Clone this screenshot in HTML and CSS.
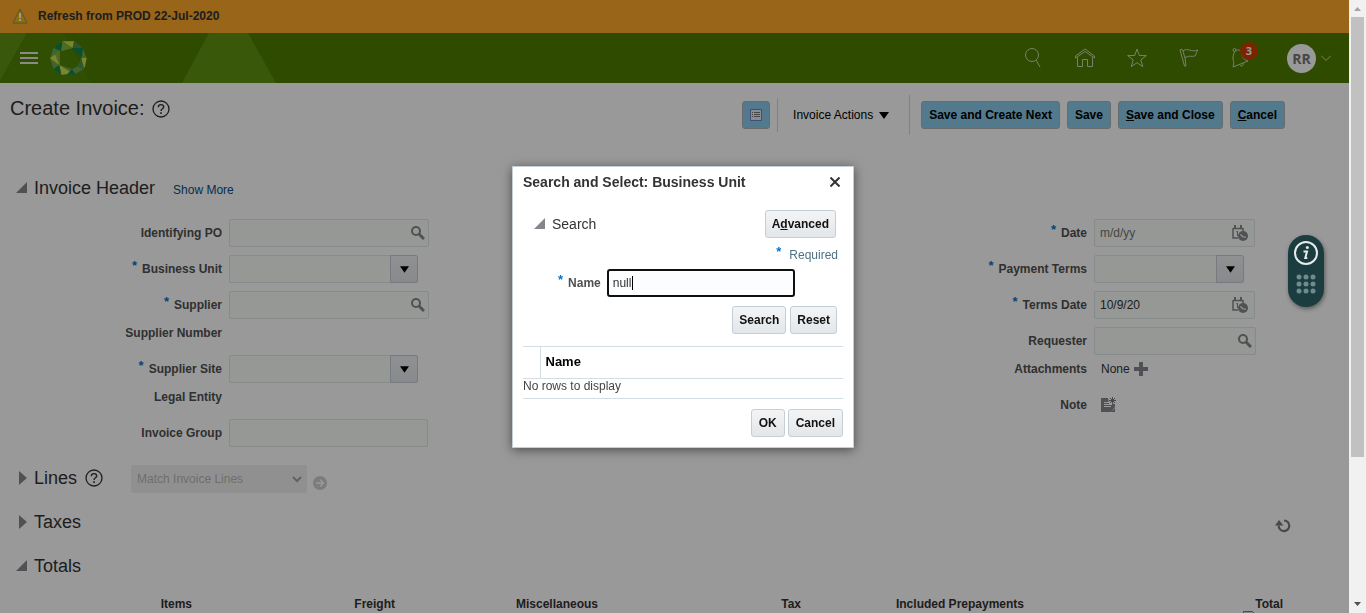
FILE: index.html
```html
<!DOCTYPE html>
<html lang="en">
<head>
<meta charset="utf-8">
<title>Create Invoice</title>
<link rel="stylesheet" href="styles.css">
</head>
<body>
<svg class="sprite" aria-hidden="true">
  <symbol id="lens" viewBox="0 0 14 14"><circle cx="5" cy="5" r="4" fill="none" stroke="#84888c" stroke-width="2"/><path d="M8 8l5 5" stroke="#84888c" stroke-width="3"/></symbol>
  <symbol id="caret" viewBox="0 0 10 7"><path d="M0 0h10L5 7z"/></symbol>
  <symbol id="open" viewBox="0 0 12 14"><path d="M11 1v11H0z" fill="#84888c"/></symbol>
  <symbol id="closed" viewBox="0 0 12 14"><path d="M3 0l8 7-8 7z" fill="#84888c"/></symbol>
  <symbol id="help" viewBox="0 0 18 18"><circle cx="9" cy="9" r="8" fill="none" stroke="#333" stroke-width="1.3"/><path d="M6.3 7.2Q6.400 4.600 9 4.600T11.700 7C11.700 8.800 9 8.800 9 11" fill="none" stroke="#333" stroke-width="1.4"/><path d="M8.200 12.300h1.600v1.600H8.200z" fill="#333"/></symbol>
  <symbol id="calendar" viewBox="0 0 16 16"><path d="M1 3v10h5M11 3v3M1 3.500h10" fill="none" stroke="#84888c" stroke-width="1.500"/><path d="M2 0h2v4H2zM8 0h2v4H8zM4.500 6H6v5H5V7.200h-.8z" fill="#84888c"/><circle cx="11" cy="11" r="5" fill="#84888c"/><path d="M8.500 9.500L11 12h3" fill="none" stroke="#fff" stroke-width="1.200"/></symbol>
</svg>

<div class="page">
  <div class="banner">
    <svg width="16" height="16" viewBox="0 0 16 16"><path d="M8 1l7 14H1z" fill="#e8b818" stroke="#a08848" stroke-linejoin="round"/><path d="M8 5v5M8 11v2" stroke="#fff" stroke-width="2"/></svg>
    <span>Refresh from PROD 22-Jul-2020</span>
  </div>

  <header class="topbar">
    <svg class="facets" width="276" height="50" viewBox="0 0 276 50"><path d="M0 0h27L0 48z" fill="#5f9315"/><path d="M27 0h36l29 50H0z" fill="#528404"/><path d="M209 0h39l28 50h-94z" fill="#60930f"/></svg>
    <button class="icon menu" aria-label="Navigator"><svg width="18" height="14" viewBox="0 0 18 14"><path d="M0 2h18M0 7h18M0 12h18" stroke="#e6eadd" stroke-width="2"/></svg></button>
    <a class="logo" href="#" aria-label="Home page">
      <svg width="37" height="34" viewBox="0 0 111 102">
        <path fill-rule="evenodd" fill="#6da64d" d="M38 1h34l26 19 12 32-10 32-28 17H36L10 84 0 52l10-32zM28 32v40l38 12 18-8 11-26-27-30z"/>
        <path fill="#d0e040" d="M38 1h34l-4 20zM0 52l28-22v42zM92 51l18-1-6 32zM28 72l38 24-31 5z"/>
        <path fill="#11854b" d="M10 20L38 1l-5 30zM66 21l34-3-5 32zM66 84l11 17H50zM10 84l18-12 5 28z"/>
        <path fill="#86b23e" d="M38 1l30 20-34 9zM28 30l-14 8 14 34z"/>
        <path fill="#4d8f52" d="M95 50L82 76l18 10zM72 1l26 19-30 1z"/>
      </svg>
    </a>
    <nav class="tools" aria-label="Global">
      <button class="icon" aria-label="Search"><svg width="20" height="20" viewBox="0 0 20 20"><circle cx="9" cy="7" r="6.500"/><path d="M13 12l4 7"/></svg></button>
      <button class="icon" aria-label="Home"><svg width="20" height="20" viewBox="0 0 20 20"><path d="M.5 10V8L10 1l9.500 7v2L10 3.500zM2.500 9.500v9h5v-7h5v7h5v-9"/></svg></button>
      <button class="icon" aria-label="Favorites"><svg width="20" height="20" viewBox="0 0 20 20"><path d="M10 1l2.300 6.500 7 .1-5.500 4.300 2 6.800L10 14.700l-5.800 4 2-6.800L.7 7.600l7-.1z"/></svg></button>
      <button class="icon" aria-label="Watchlist"><svg width="20" height="20" viewBox="0 0 20 20"><path d="M1 2l1.500-1L4 3c5-4 8 2 15-1-2 2-1 3-3 6-4 1-7-1-10 2l1 8H5.500zM4 3l2 7"/></svg></button>
      <button class="icon bell" aria-label="Notifications, 3 new"><svg width="20" height="20" viewBox="0 0 20 20"><path d="M4 3C7 1 11 2 11 6c0 3 1 5 6 7L2 19c1.500-5 0-6 0-9 0-3 1-5 2-7zM9 17c1 2 4 1 3-2"/><circle cx="3.500" cy="2" r="1.500"/></svg><span class="badge">3</span></button>
      <button class="icon user" aria-label="Settings and actions"><span class="avatar">RR</span><svg width="10" height="6" viewBox="0 0 10 6"><path d="M0 .500l5 5 5-5"/></svg></button>
    </nav>
  </header>

  <main>
    <div class="titlebar">
      <h1>Create Invoice:</h1>
      <button class="icon help" aria-label="Help"><svg width="18" height="18"><use href="#help"/></svg></button>
      <div class="toolbar">
        <button class="btn primary square" aria-label="View"><svg width="12" height="12" viewBox="0 0 12 12"><path fill="#e4e8ff" stroke="#6a84bd" d="M.5.500h11v11H.500z"/><path stroke="#777" d="M2 3.500h1M4 3.500h6M2 5.500h1M4 5.500h6M2 7.500h1M4 7.500h6"/></svg></button>
        <span class="divider short"></span>
        <button class="icon actions">Invoice Actions <svg width="10" height="7"><use href="#caret"/></svg></button>
        <span class="divider"></span>
        <button class="btn primary">Save and Create Next</button>
        <button class="btn primary">Save</button>
        <button class="btn primary"><u>S</u>ave and Close</button>
        <button class="btn primary"><u>C</u>ancel</button>
      </div>
    </div>

    <div class="section first">
      <button class="icon" aria-label="Collapse Invoice Header"><svg width="12" height="14"><use href="#open"/></svg></button>
      <h2>Invoice Header</h2>
      <a class="more" href="#">Show More</a>
    </div>

    <div class="forms">
      <div class="form left">
        <div class="row"><label for="po">Identifying PO</label><div class="field"><input id="po"><button class="icon" aria-label="Search PO"><svg width="14" height="14"><use href="#lens"/></svg></button></div></div>
        <div class="row"><label for="bu"><i>*</i>Business Unit</label><div class="field combo"><input id="bu"><button class="drop" aria-label="Open list"><svg width="9" height="7"><use href="#caret"/></svg></button></div></div>
        <div class="row"><label for="sup"><i>*</i>Supplier</label><div class="field"><input id="sup"><button class="icon" aria-label="Search supplier"><svg width="14" height="14"><use href="#lens"/></svg></button></div></div>
        <div class="row plain"><span class="label">Supplier Number</span></div>
        <div class="row"><label for="site"><i>*</i>Supplier Site</label><div class="field combo"><input id="site"><button class="drop" aria-label="Open list"><svg width="9" height="7"><use href="#caret"/></svg></button></div></div>
        <div class="row plain"><span class="label">Legal Entity</span></div>
        <div class="row"><label for="grp">Invoice Group</label><div class="field text"><input id="grp"></div></div>
      </div>
      <div class="form right">
        <div class="row"><label for="date"><i>*</i>Date</label><div class="field date"><input id="date" placeholder="m/d/yy"><button class="icon" aria-label="Select date"><svg width="16" height="16"><use href="#calendar"/></svg></button></div></div>
        <div class="row"><label for="pay"><i>*</i>Payment Terms</label><div class="field combo"><input id="pay"><button class="drop" aria-label="Open list"><svg width="9" height="7"><use href="#caret"/></svg></button></div></div>
        <div class="row"><label for="terms"><i>*</i>Terms Date</label><div class="field date"><input id="terms" value="10/9/20"><button class="icon" aria-label="Select terms date"><svg width="16" height="16"><use href="#calendar"/></svg></button></div></div>
        <div class="row"><label for="req">Requester</label><div class="field"><input id="req"><button class="icon" aria-label="Search requester"><svg width="14" height="14"><use href="#lens"/></svg></button></div></div>
        <div class="row plain"><span class="label">Attachments</span><div class="value">None <button class="icon" aria-label="Add attachment"><svg width="14" height="14" viewBox="0 0 14 14"><path d="M7 0v14M0 7h14" stroke="#84888c" stroke-width="4"/></svg></button></div></div>
        <div class="row"><span class="label">Note</span><div class="value"><button class="icon" aria-label="Add note"><svg width="16" height="16" viewBox="0 0 16 16"><path d="M0 1h7l1 6h6v3l-4 5H0z" fill="#84888c"/><path d="M3 5.500h5M3 7.500h8M3 9.500h7" stroke="#fff"/><path d="M14 11v4h-4z" fill="#84888c"/><path d="M11.500 0v7M8 3.500h7M9 1l5 5M14 1L9 6" stroke="#777b7f"/></svg></button></div></div>
      </div>
    </div>

    <div class="section">
      <button class="icon" aria-label="Expand Lines"><svg width="12" height="14"><use href="#closed"/></svg></button>
      <h2>Lines</h2>
      <button class="icon help" aria-label="Help"><svg width="18" height="18"><use href="#help"/></svg></button>
      <div class="match">
        <select aria-label="Match Invoice Lines" disabled><option>Match Invoice Lines</option></select>
        <svg width="10" height="7" viewBox="0 0 10 7"><path d="M1 1l4 4 4-4" fill="none" stroke="#a2a2a2" stroke-width="2"/></svg>
      </div>
      <button class="icon go" aria-label="Go" disabled><svg width="14" height="14" viewBox="0 0 14 14"><circle cx="7" cy="7" r="7" fill="#cfcfcf"/><path d="M3 7h7M7 3.500L10.500 7 7 10.500" fill="none" stroke="#fff" stroke-width="1.500"/></svg></button>
    </div>
    <div class="section">
      <button class="icon" aria-label="Expand Taxes"><svg width="12" height="14"><use href="#closed"/></svg></button>
      <h2>Taxes</h2>
      <button class="icon refresh" aria-label="Refresh"><svg width="16" height="14" viewBox="0 0 16 14"><path d="M9 1.500a5.300 5.300 0 1 1-5.300 5" fill="none" stroke="#777b7f" stroke-width="2.200"/><path d="M0 6.500L4 1l4.500 5.500z" fill="#777b7f"/></svg></button>
    </div>
    <div class="section">
      <button class="icon" aria-label="Collapse Totals"><svg width="12" height="14"><use href="#open"/></svg></button>
      <h2>Totals</h2>
    </div>

    <table class="totals">
      <colgroup><col class="c-first"><col class="c-mid"><col class="c-mid"><col class="c-mid"><col class="c-pre"><col></colgroup>
      <thead><tr><th>Items</th><th>Freight</th><th>Miscellaneous</th><th>Tax</th><th>Included Prepayments</th><th>Total</th></tr></thead>
      <tbody><tr><td></td><td></td><td></td><td></td><td></td><td><svg width="13" height="14" viewBox="0 0 13 14"><path d="M.5.500h9l3 3v10H.500z" fill="#e0e0ee" stroke="#7c7c90"/></svg></td></tr></tbody>
    </table>
  </main>
  <div class="backdrop"></div>
</div>

<div class="scrollbar" aria-hidden="true">
  <svg width="7" height="4" viewBox="0 0 7 4"><path d="M0 4h7L3.500 0z" fill="#a3a3a3"/></svg>
  <div class="track"><div class="thumb"></div></div>
  <svg width="7" height="4" viewBox="0 0 7 4"><path d="M0 0h7L3.500 4z" fill="#505050"/></svg>
</div>

<div class="assist">
  <svg width="24" height="24" viewBox="0 0 24 24"><circle cx="12" cy="12" r="11" fill="none" stroke="#e6ecec" stroke-width="2"/><circle cx="13.300" cy="6.500" r="1.500" fill="#e6ecec"/><path d="M9.500 10.500h3.500l-1.700 6.500h2" fill="none" stroke="#e6ecec" stroke-width="2"/></svg>
  <svg width="20" height="20" viewBox="0 0 20 20" fill="#708b8d"><circle cx="3" cy="3" r="2.500"/><circle cx="10" cy="3" r="2.500"/><circle cx="17" cy="3" r="2.500"/><circle cx="3" cy="10" r="2.500"/><circle cx="10" cy="10" r="2.500"/><circle cx="17" cy="10" r="2.500"/><circle cx="3" cy="17" r="2.500"/><circle cx="10" cy="17" r="2.500"/><circle cx="17" cy="17" r="2.500"/></svg>
</div>

<div class="layer">
  <section class="dialog" role="dialog" aria-labelledby="dlg">
    <div class="dlg-head">
      <h2 id="dlg">Search and Select: Business Unit</h2>
      <button class="icon" aria-label="Close"><svg width="10" height="10" viewBox="0 0 10 10"><path d="M.500.500l9 9M9.500.500l-9 9" stroke="#333" stroke-width="2"/></svg></button>
    </div>
    <div class="dlg-search">
      <div class="dlg-bar">
        <button class="icon" aria-label="Collapse Search"><svg width="12" height="14"><use href="#open"/></svg></button>
        <h3>Search</h3>
        <button class="btn">A<u>d</u>vanced</button>
      </div>
      <p class="required"><i>*</i>Required</p>
      <div class="dlg-name"><label for="name"><i>*</i>Name</label><div class="focus"><input id="name" value="null" size="2"><span class="cursor"></span></div></div>
      <div class="actions-row"><button class="btn">Search</button><button class="btn">Reset</button></div>
    </div>
    <table class="results">
      <thead><tr><th class="pick"></th><th>Name</th></tr></thead>
      <tbody><tr><td colspan="2">No rows to display</td></tr></tbody>
    </table>
    <div class="dlg-foot"><button class="btn">OK</button><button class="btn">Cancel</button></div>
  </section>
</div>
</body>
</html>
```

FILE: styles.css
```css
* { box-sizing: border-box; }
body {
  margin: 0;
  display: flex;
  height: 100vh;
  overflow: hidden;
  font: 12px/16px "Liberation Sans", Arial, sans-serif;
  color: #333;
}
h1, h2, h3, p { margin: 0; font-weight: normal; }
button, input, select { font: inherit; color: inherit; }
svg { display: block; flex: none; }
.sprite { position: absolute; width: 0; height: 0; }
i { font-style: normal; }

.icon {
  display: flex;
  align-items: center;
  padding: 0;
  border: 0;
  background: none;
}
.page {
  position: relative;
  flex: 1;
  min-width: 0;
  overflow: hidden;
  background: #fff;
}
.backdrop {
  position: absolute;
  inset: 0;
  background: rgba(0, 0, 0, .4);
}

.banner {
  display: flex;
  align-items: center;
  gap: 10px;
  height: 33px;
  padding: 0 0 2px 12px;
  background: #ffa82b;
  font-weight: bold;
}

.topbar {
  position: relative;
  display: flex;
  align-items: center;
  height: 50px;
  padding: 0 18px 0 20px;
  background: #4e7d00;
}
.facets { position: absolute; left: 0; top: 0; }
.menu, .logo { position: relative; }
.logo { margin-left: 12px; }
.tools {
  display: flex;
  align-items: center;
  gap: 32px;
  margin-left: auto;
}
.tools svg { fill: none; stroke: #cad8b2; stroke-width: 1; }
.bell { position: relative; }
.badge {
  position: absolute;
  left: 9px;
  top: -6px;
  width: 18px;
  height: 18px;
  border-radius: 50%;
  background: #cc3e00;
  color: #fff;
  font: bold 11px/18px "Open Sans", sans-serif;
  text-align: center;
}
.user { gap: 5px; margin-left: 4px; }
.avatar {
  width: 29px;
  height: 29px;
  border-radius: 50%;
  background: #fff;
  color: #777;
  font: bold 14px/29px "Open Sans", sans-serif;
  text-align: center;
}

.titlebar {
  display: flex;
  align-items: flex-start;
  padding: 12px 64px 0 10px;
}
h1 { font-size: 20px; line-height: 26px; }
.titlebar .help { height: 28px; margin-left: 7px; }
.toolbar {
  display: flex;
  align-items: center;
  gap: 7px;
  height: 40px;
  margin-left: auto;
}
.divider { width: 1px; height: 40px; margin-right: 4px; background: #d5d8db; }
.divider.short { height: 34px; margin-right: 8px; }
.actions { gap: 6px; margin-right: 13px; color: #000; }
.btn {
  height: 28px;
  padding: 0 6px;
  border: 1px solid #c4ced7;
  border-radius: 3px;
  background: linear-gradient(#f3f4f5, #e3e7ea);
  color: #111;
  font-weight: bold;
}
.btn.primary { padding: 0 7px; border-color: #aeb5b8; background: #89cae9; color: #000; }
.square { display: grid; place-items: center; width: 28px; }

.section {
  display: flex;
  align-items: center;
  height: 28px;
  margin-bottom: 16px;
  padding: 0 58px 0 16px;
}
.section.first { height: 26px; margin: 40px 0 14px; }
h2 { font-size: 18px; }
.section h2 { margin-left: 6px; line-height: 26px; }
.section .help { margin-left: 8px; }
.more { margin: 4px 0 0 18px; color: #0b4a86; text-decoration: none; }
.match { display: grid; align-items: center; margin: 2px 0 0 28px; }
.match > * { grid-area: 1 / 1; }
.match svg { justify-self: end; margin-right: 5px; }
select {
  width: 176px;
  height: 28px;
  padding: 0 6px;
  border: 0;
  border-radius: 2px;
  appearance: none;
  background: #f1f1f1;
  color: #b8b8b8;
  opacity: 1;
}
.go { margin: 10px 0 0 6px; }
.refresh { margin: 7px 0 0 auto; }

.forms {
  display: flex;
  justify-content: space-between;
  margin-bottom: 13px;
  padding-right: 93px;
}
.row {
  display: grid;
  align-items: center;
  column-gap: 7px;
  height: 36px;
}
.left .row { grid-template-columns: 222px 200px; }
.right .row { grid-template-columns: 120px 162px; }
.row.plain { height: 28px; padding-bottom: 8px; }
label, .label { color: #505050; font-weight: bold; text-align: right; }
label i, .required i { position: relative; top: -3px; margin-right: 5px; color: #0572ce; font-size: 13px; }
.required i { font-weight: bold; }
.field {
  display: flex;
  align-items: stretch;
  height: 28px;
  border: 1px solid #dfe7e7;
  border-radius: 2px;
  background: #fafdfb;
}
.field input {
  flex: 1;
  min-width: 0;
  padding: 0 5px;
  border: 0;
  background: none;
  outline: none;
}
.field input::placeholder { color: #757575; }
.field .icon { margin-right: 3px; }
.date { margin-right: 1px; }
.date .icon { margin-right: 6px; }
.text { margin-right: 1px; }
.combo { margin-right: 11px; }
.right .combo { margin-right: 12px; }
.drop {
  display: grid;
  place-items: center;
  width: 28px;
  margin: -1px;
  border: 1px solid #c5cdd8;
  border-radius: 0 3px 3px 0;
  background: linear-gradient(#f0f1f3, #e3e6e9);
}
.value { display: flex; align-items: center; gap: 4px; padding-left: 7px; }

.totals {
  width: calc(100% - 66px);
  table-layout: fixed;
  border-collapse: collapse;
}
.totals th { padding: 0; line-height: 16px; text-align: right; }
.totals td { padding: 0 27px 0 0; }
.totals td svg { margin: -1px 0 0 auto; }
.c-first { width: 192px; }
.c-mid { width: 203px; }
.c-pre { width: 223px; }

.scrollbar {
  display: flex;
  flex-direction: column;
  align-items: center;
  flex: none;
  width: 17px;
  padding: 7px 0;
  background: #f1f1f1;
}
.track { flex: 1; width: 13px; margin: 6px 0; }
.thumb { height: 76%; background: #c1c1c1; }

.assist {
  position: fixed;
  right: 42px;
  top: 235px;
  display: flex;
  flex-direction: column;
  align-items: center;
  gap: 9px;
  width: 36px;
  height: 72px;
  padding-top: 6px;
  border-radius: 18px;
  background: #1b3d40;
  box-shadow: 1px 2px 4px rgba(0, 0, 0, .4);
}

.layer {
  position: fixed;
  inset: 0;
  display: grid;
  place-items: center;
  pointer-events: none;
}
.dialog {
  width: 342px;
  padding: 5px 10px 10px;
  border: 1px solid #c4ced7;
  background: #fff;
  box-shadow: 0 2px 10px rgba(0, 0, 0, .5);
  pointer-events: auto;
}
.dlg-head { display: flex; justify-content: space-between; align-items: center; padding-right: 3px; }
.dlg-head h2 { font-size: 14px; line-height: 20px; font-weight: bold; }
.dlg-search { padding: 18px 6px 12px 11px; }
.dlg-bar { display: flex; align-items: center; }
.dlg-bar h3 { margin-left: 6px; font-size: 14px; }
.dlg-bar .btn { margin: 0 1px 0 auto; }
.required { margin: 9px -1px 6px 0; color: #4f7186; text-align: right; }
.required i { margin-right: 8px; }
.dlg-name { display: flex; align-items: center; gap: 6px; padding: 0 42px 0 24px; }
.focus {
  display: flex;
  align-items: center;
  flex: 1;
  height: 28px;
  padding: 0 4px;
  border: 2px solid #101010;
  border-radius: 3px;
  background: #fbfdff;
}
.focus input { width: 19px; padding: 0; border: 0; background: none; outline: none; }
.cursor { width: 1px; height: 14px; background: #000; }
.actions-row { display: flex; justify-content: flex-end; gap: 4px; margin-top: 9px; }
.results {
  width: 100%;
  border-collapse: collapse;
  border-top: 1px solid #d3dde4;
  border-bottom: 1px solid #d3dde4;
}
.results th {
  height: 32px;
  padding: 0 5px;
  border-bottom: 1px solid #d3dde4;
  color: #000;
  font-size: 13px;
  text-align: left;
}
.results .pick { width: 17px; border-right: 1px solid #d3dde4; padding: 0; }
.results td { height: 19px; padding: 0 0 4px; color: #444; line-height: 15px; }
.dlg-foot { display: flex; justify-content: flex-end; gap: 3px; margin-top: 10px; }
.dlg-foot .btn { padding: 0 7px; }
```
